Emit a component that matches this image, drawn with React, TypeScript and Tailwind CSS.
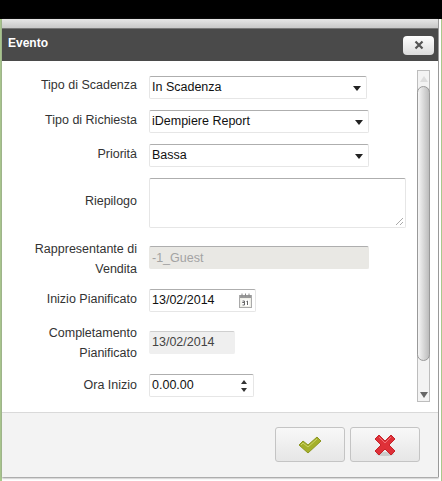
const font = { fontFamily: '"Liberation Sans", Arial, sans-serif' };

function Caret() {
  return <span className="absolute right-[5px] top-[9px] h-0 w-0 border-x-[4px] border-t-[5px] border-x-transparent border-t-[#222]" />;
}

function Row({ label, mt, h, labelClass, children }: { label: React.ReactNode; mt: string; h: string; labelClass?: string; children: React.ReactNode }) {
  return (
    <div className={`flex ${mt} ${h}`}>
      <div className={`w-[135px] shrink-0 text-right text-[12.5px] text-[#333] leading-[19px] ${labelClass ?? ""}`}>{label}</div>
      <div className="ml-[12px]">{children}</div>
    </div>
  );
}

const field = "relative flex items-center rounded-[2px] border border-[#e6e6e6] border-t-[#aeaeae] bg-white pl-[2px] text-[12.5px] text-[#111]";

export default function App() {
  return (
    <div className="relative h-[481px] w-[442px] overflow-hidden bg-white" style={font}>
      <div className="h-[19px] bg-black" />
      <div className="flex h-[462px]">
        <div className="w-[2px] bg-[#a9c98c]" />
        <div className="flex h-[458px] w-[437px] flex-col border-r border-[#999] bg-white shadow-[0_1px_2px_#888]">
          <div className="h-[10px] border-b border-[#777] bg-gradient-to-b from-[#e6e6e6] to-[#c8c8c8]" />
          <div className="flex h-[32px] items-center justify-between bg-[#4a4a4a] pl-[6px] pr-[4px]">
            <span className="mb-[4px] text-[12px] font-bold text-white">Evento</span>
            <span className="flex h-[19px] w-[31px] items-center justify-center rounded-[4px] bg-gradient-to-b from-white to-[#dcdcdc]">
              <svg width="10" height="10" viewBox="0 0 10 10"><path d="M1.5 1.5l7 7M8.5 1.5l-7 7" stroke="#555" strokeWidth="2.2" /></svg>
            </span>
          </div>
          <div className="relative flex h-[352px] flex-col border-b border-[#d9d9d9] pt-[15px]">
            <Row label="Tipo di Scadenza" mt="mt-0" h="h-[23px]">
              <div className={`${field} h-[23px] w-[218px]`}>In Scadenza<Caret /></div>
            </Row>
            <Row label="Tipo di Richiesta" mt="mt-[11px]" h="h-[23px]" labelClass="pt-[1px]">
              <div className={`${field} h-[23px] w-[220px]`}>iDempiere Report<Caret /></div>
            </Row>
            <Row label="Priorità" mt="mt-[11px]" h="h-[23px]" labelClass="pt-[1px]">
              <div className={`${field} h-[23px] w-[220px]`}>Bassa<Caret /></div>
            </Row>
            <Row label="Riepilogo" mt="mt-[11px]" h="h-[50px]" labelClass="pt-[14px]">
              <div className={`${field} h-[50px] w-[257px]`}>
                <svg className="absolute bottom-[1px] right-[1px]" width="9" height="9" viewBox="0 0 9 9">
                  <path d="M1 8l7-7M5 8l3-3" stroke="#aaa" strokeWidth="1" />
                </svg>
              </div>
            </Row>
            <Row label={<>Rappresentante di<br />Vendita</>} mt="mt-[18px]" h="h-[23px]" labelClass="mt-[-7px] !leading-[20px]">
              <div className={`${field} h-[23px] w-[220px] !border-[#e9e8e4] !border-t-[#aeaeae] !bg-[#e9e8e4] pt-[2px] !text-[#a3a3a3]`}>-1_Guest</div>
            </Row>
            <Row label="Inizio Pianificato" mt="mt-[20px]" h="h-[23px]" labelClass="pt-[1px]">
              <div className={`${field} h-[23px] w-[107px]`}>
                13/02/2014
                <svg className="absolute right-[3px] top-[3px]" width="13" height="15" viewBox="0 0 13 15">
                  <rect x="0.5" y="2.5" width="12" height="12" fill="#efefe8" stroke="#aaa" />
                  <rect x="1" y="2" width="11" height="3" fill="#999" />
                  <path d="M3 0.5v3M6.5 0.5v3M10 0.5v3" stroke="#888" />
                  <rect x="2.5" y="6.5" width="8" height="6.5" fill="#fff" />
                  <path d="M3.5 8h2v1.5h-2M3.5 9.5h2V12h-2M7.5 8.5l1-.5v4" fill="none" stroke="#666" />
                </svg>
              </div>
            </Row>
            <Row label={<>Completamento<br />Pianificato</>} mt="mt-[19px]" h="h-[23px]" labelClass="mt-[-8px] !leading-[20px]">
              <div className={`${field} h-[23px] w-[86px] !border-[#efefef] !bg-[#efefef] !border-t-[#cfcfcf] !text-[#444]`}>13/02/2014</div>
            </Row>
            <Row label="Ora Inizio" mt="mt-[20px]" h="h-[23px]" labelClass="pt-[2px]">
              <div className={`${field} h-[23px] w-[105px]`}>
                0.00.00
                <span className="absolute right-[6px] top-[5px] h-0 w-0 border-x-[3px] border-b-[4px] border-x-transparent border-b-[#333]" />
                <span className="absolute right-[6px] top-[13px] h-0 w-0 border-x-[3px] border-t-[4px] border-x-transparent border-t-[#333]" />
              </div>
            </Row>

            <div className="absolute left-[415px] top-[9px] flex h-[332px] w-[13px] flex-col border border-[#bdbdbd] bg-[#f3f3f3]">
              <div className="flex h-[15px] items-center justify-center">
                <span className="h-0 w-0 border-x-[4px] border-b-[6px] border-x-transparent border-b-[#ddd]" />
              </div>
              <div className="ml-[-1px] mr-[-1px] h-[275px] rounded-[7px] border border-[#999] bg-gradient-to-r from-[#f6f6f6] to-[#bcbcbc]" />
              <div className="flex-1" />
              <div className="flex h-[13px] items-center justify-center">
                <span className="h-0 w-0 border-x-[4px] border-t-[6px] border-x-transparent border-t-[#666]" />
              </div>
            </div>
          </div>
          <div className="flex flex-1 items-start justify-end gap-[5px] bg-[#f3f3f3] pr-[18px] pt-[14px]">
            <button className="flex h-[35px] w-[70px] items-center justify-center rounded-[3px] border border-[#c4c4c4] bg-gradient-to-b from-[#f8f8f8] to-[#e6e6e6]">
              <svg width="26" height="20" viewBox="0 0 26 20">
                <path d="M2 10l4-4 5 4 9-8 4 4-13 12z" fill="#a5b02c" stroke="#8c9622" strokeWidth="1" strokeLinejoin="round" />
                <path d="M4 10l2-2 5 4 9-8" fill="none" stroke="#cdd468" strokeWidth="1" />
              </svg>
            </button>
            <button className="flex h-[35px] w-[70px] items-center justify-center rounded-[3px] border border-[#c4c4c4] bg-gradient-to-b from-[#f8f8f8] to-[#e6e6e6]">
              <svg width="24" height="24" viewBox="0 0 24 24">
                <ellipse cx="12" cy="21" rx="9" ry="2" fill="#ccc" />
                <path d="M2 6l4-4 6 6 6-6 4 4-6 6 6 6-4 4-6-6-6 6-4-4 6-6z" fill="#df3038" stroke="#c4232a" strokeLinejoin="round" />
                <path d="M6 4l6 6 6-6" fill="none" stroke="#f07076" />
              </svg>
            </button>
          </div>
        </div>
        <div className="w-[2px] bg-white" />
        <div className="w-[1px] bg-[#a9c98c]" />
      </div>
    </div>
  );
}
